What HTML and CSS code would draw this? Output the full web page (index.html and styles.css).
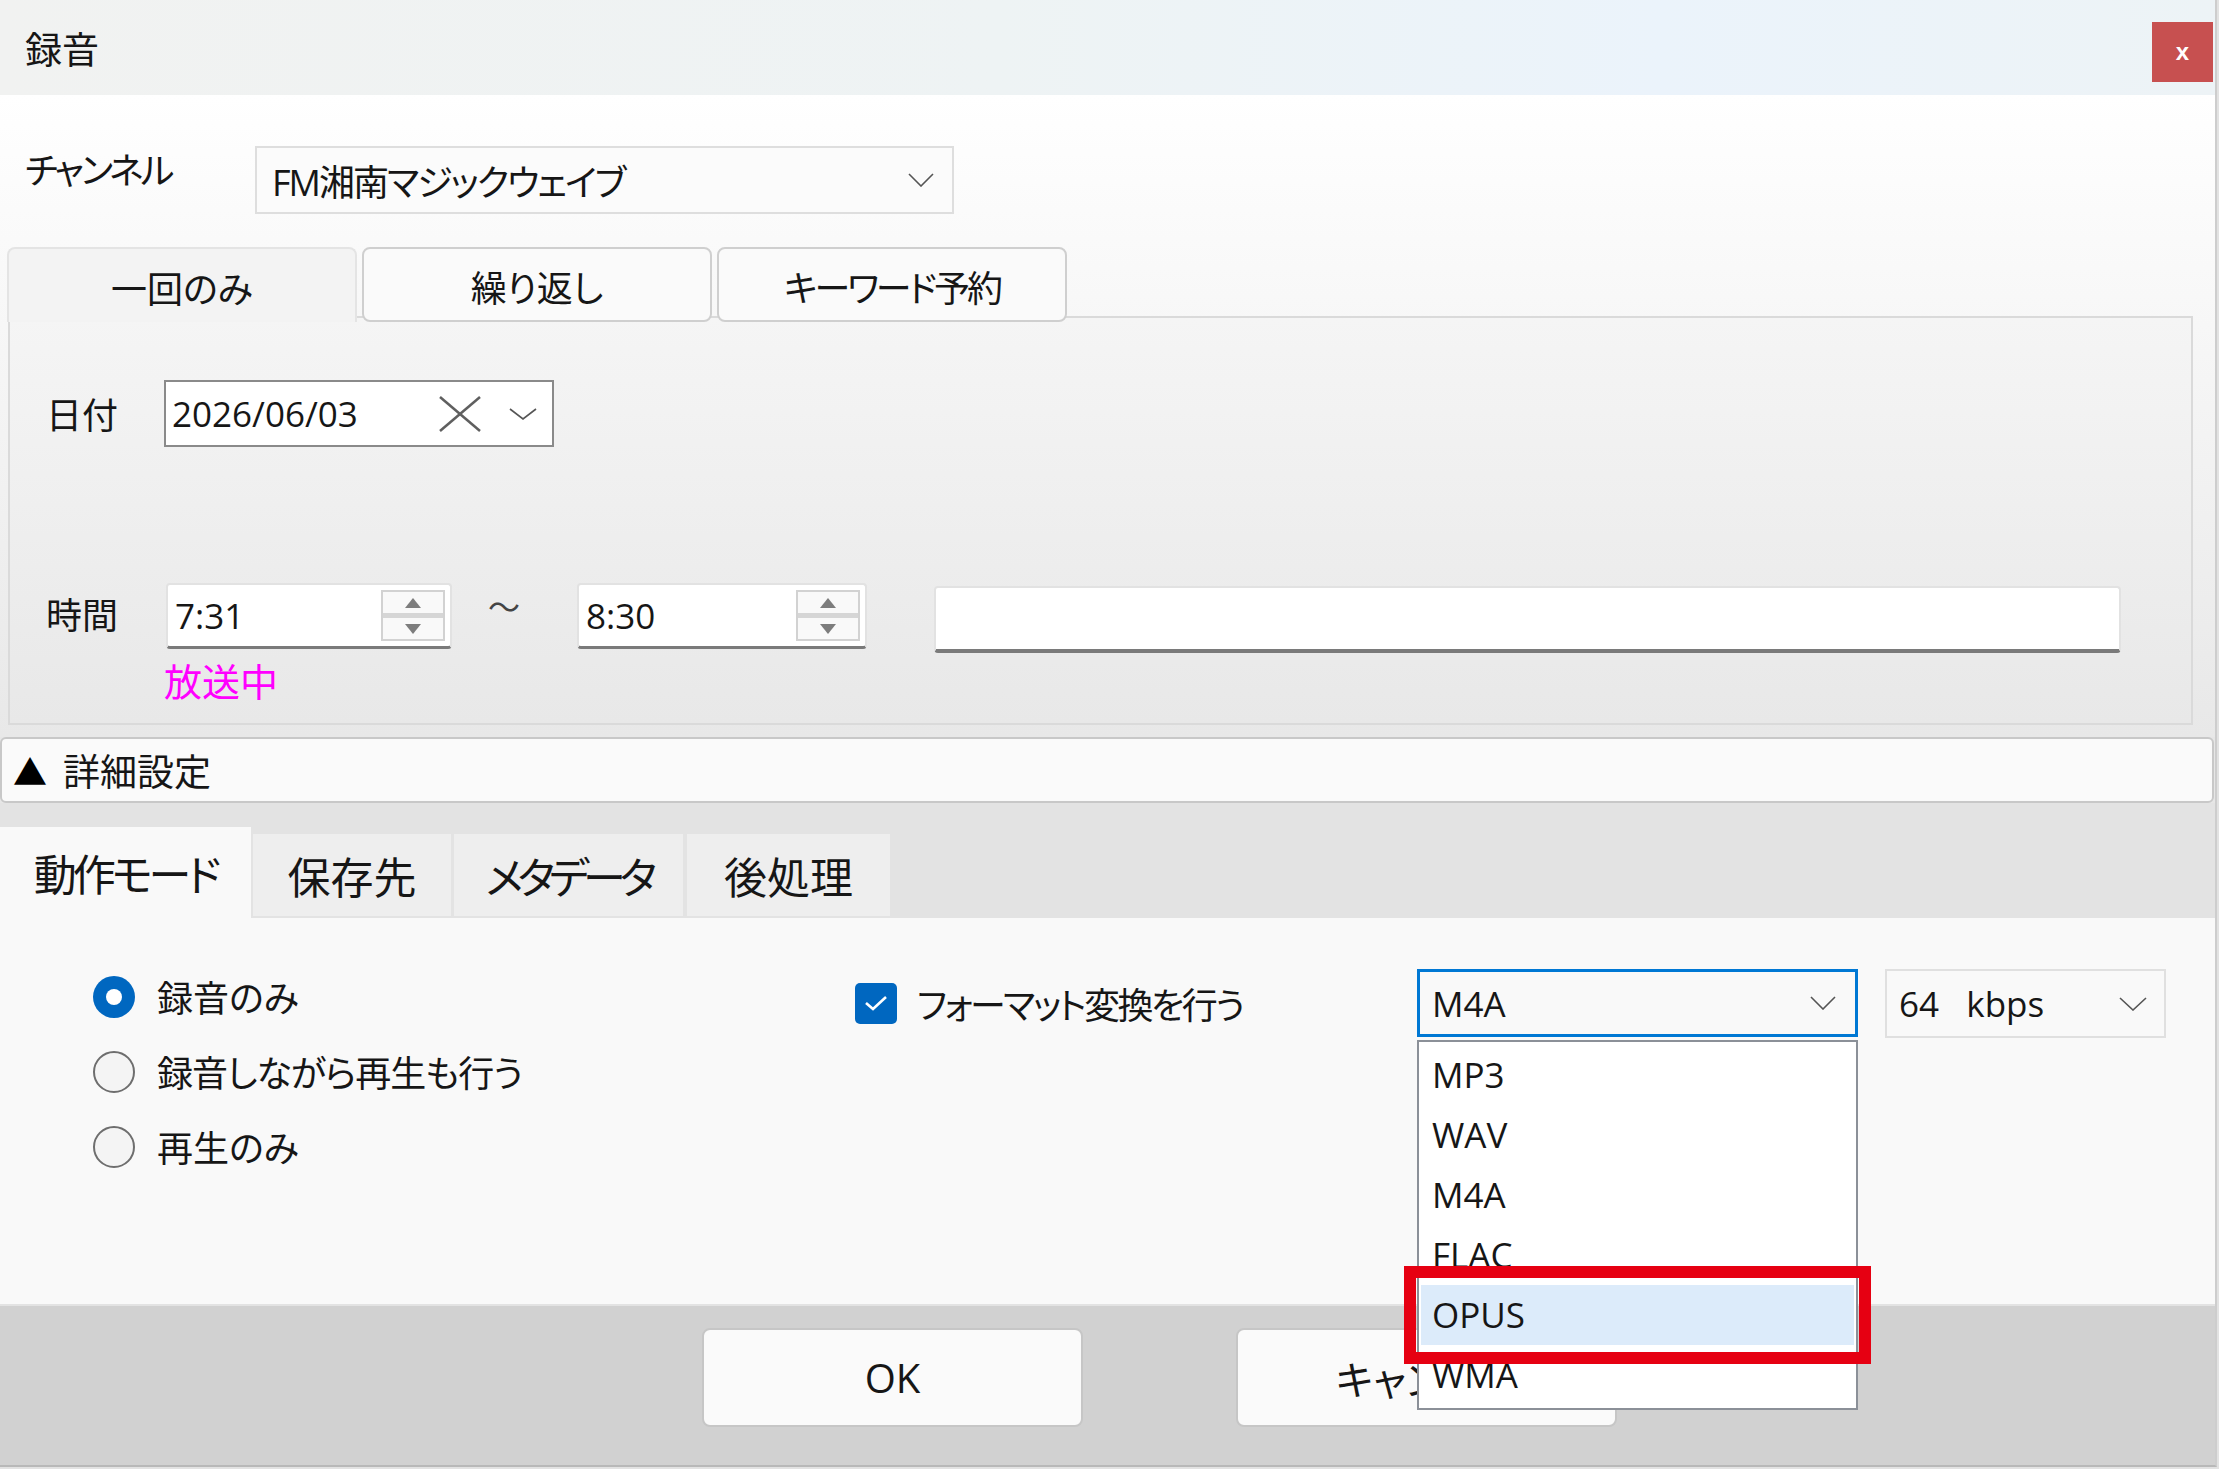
FILE: index.html
```html
<!DOCTYPE html>
<html lang="ja">
<head>
    <meta charset="UTF-8">
    <title>録音</title>
    <link rel="stylesheet" href="styles.css">
</head>
<body>
    <div class="window">
        <header class="titlebar">
            <span class="title">録音</span>
            <button class="close">x</button>
        </header>

        <div class="upper">
            <div class="channel-row">
                <span class="label">チャンネル</span>
                <div class="select channel-select">
                    <span class="kana">FM湘南マジックウェイブ</span>
                    <svg class="chevron" width="26" height="14" viewBox="0 0 26 14"><polyline points="1,1 13,13 25,1"/></svg>
                </div>
            </div>

            <div class="mode-tabs">
                <div class="mode-tab active">一回のみ</div>
                <div class="mode-tab">繰り返し</div>
                <div class="mode-tab kana">キーワード予約</div>
            </div>

            <div class="panel">
                <div class="field-row">
                    <span class="label">日付</span>
                    <div class="date-box">
                        <span>2026/06/03</span>
                        <svg class="clear" width="44" height="38" viewBox="0 0 44 38"><line x1="2" y1="2" x2="42" y2="36"/><line x1="42" y1="2" x2="2" y2="36"/></svg>
                        <svg class="chevron small" width="30" height="14" viewBox="0 0 30 14"><polyline points="2,2 15,12 28,2"/></svg>
                    </div>
                </div>

                <div class="field-row time-row">
                    <span class="label">時間</span>
                    <div class="time-box">
                        <span>7:31</span>
                        <div class="spin"><span class="up"></span><span class="down"></span></div>
                    </div>
                    <span class="tilde">～</span>
                    <div class="time-box wide">
                        <span>8:30</span>
                        <div class="spin"><span class="up"></span><span class="down"></span></div>
                    </div>
                    <div class="memo-box"></div>
                </div>
                <div class="on-air">放送中</div>
            </div>
        </div>

        <div class="detail-wrap">
            <div class="detail-bar"><span class="arrow">▲</span>詳細設定</div>
        </div>

        <div class="sub-tabs">
            <div class="sub-tab active">動作モード</div>
            <div class="sub-tab t-save">保存先</div>
            <div class="sub-tab t-meta">メタデータ</div>
            <div class="sub-tab t-post">後処理</div>
        </div>

        <div class="sub-content">
            <div class="radio-list">
                <div class="radio-row"><span class="radio on"></span>録音のみ</div>
                <div class="radio-row tight"><span class="radio"></span>録音しながら再生も行う</div>
                <div class="radio-row"><span class="radio"></span>再生のみ</div>
            </div>

            <div class="convert">
                <span class="check">
                    <svg width="24" height="16" viewBox="0 0 24 16"><polyline points="2,8 9,14 22,2"/></svg>
                </span>
                <span class="kana">フォーマット変換を行う</span>
            </div>

            <div class="format-wrap">
                <div class="select format-select">
                    <span>M4A</span>
                    <svg class="chevron" width="26" height="14" viewBox="0 0 26 14"><polyline points="1,1 13,13 25,1"/></svg>
                </div>
                <ul class="format-list">
                    <li>MP3</li>
                    <li>WAV</li>
                    <li>M4A</li>
                    <li>FLAC</li>
                    <li class="hover">OPUS</li>
                    <li>WMA</li>
                    <div class="callout"></div>
                </ul>
            </div>

            <div class="select rate-select">
                <span>64&nbsp;&nbsp;&nbsp;kbps</span>
                <svg class="chevron" width="28" height="14" viewBox="0 0 28 14"><polyline points="1,1 14,13 27,1"/></svg>
            </div>
        </div>

        <div class="footer">
            <button class="btn">OK</button>
            <button class="btn">キャンセル</button>
        </div>
    </div>
</body>
</html>
```

FILE: styles.css
```css
* {
    margin: 0;
    padding: 0;
    box-sizing: border-box;
}

body {
    width: 2219px;
    height: 1469px;
    overflow: hidden;
    background: #e2e2e2;
    font-family: "Open Sans", "Noto Sans CJK JP", sans-serif;
    font-size: 36px;
    color: #161616;
    font-feature-settings: "palt";
}

.kana {
    letter-spacing: -2px;
}

.window {
    width: 2217px;
    height: 1467px;
    border-right: 2px solid #cdcdcd;
    border-bottom: 2px solid #b8b8b8;
    background: #f9f9f9;
    display: flex;
    flex-direction: column;
}

/* title bar */
.titlebar {
    height: 95px;
    flex: none;
    display: flex;
    align-items: center;
    padding-left: 25px;
    background: linear-gradient(90deg, #f1f2f1 0%, #eef3f4 45%, #ebf3fb 75%, #edf3f6 100%);
}
.title {
    font-size: 37px;
}
.close {
    margin-left: auto;
    margin-right: 2px;
    align-self: flex-start;
    margin-top: 22px;
    width: 61px;
    height: 60px;
    border: 0;
    background: #c75050;
    color: #fff;
    font: bold 24px "Liberation Sans", sans-serif;
}

/* upper part */
.upper {
    flex: none;
    padding: 51px 0 12px;
    background: linear-gradient(#ffffff 0, #f7f7f7 230px, #e8e8e8 100%);
}
.channel-row {
    display: flex;
    align-items: flex-start;
    height: 68px;
    padding-left: 25px;
}
.channel-row .label {
    width: 230px;
    line-height: 50px;
    letter-spacing: -3px;
}
.select {
    display: flex;
    align-items: center;
    justify-content: space-between;
    background: #fbfbfb;
    border: 2px solid #dedede;
}
.channel-select {
    width: 699px;
    height: 68px;
    padding: 0 18px 0 15px;
}
.chevron polyline {
    fill: none;
    stroke: #555;
    stroke-width: 1.6;
}

.mode-tabs {
    display: flex;
    gap: 5px;
    margin-top: 33px;
    padding-left: 7px;
    position: relative;
    z-index: 1;
}
.mode-tab {
    width: 350px;
    height: 75px;
    display: flex;
    align-items: center;
    justify-content: center;
    padding-top: 4px;
    border: 2px solid #cfcfcf;
    border-radius: 8px;
    background: #fafafa;
}
.mode-tab.kana {
    letter-spacing: -3px;
}
.mode-tab.active {
    background: #f3f3f3;
    border-color: #e4e4e4;
    border-bottom: none;
    border-radius: 8px 8px 0 0;
}

.panel {
    margin: -6px 22px 0 8px;
    height: 409px;
    border: 2px solid #dadada;
    background: linear-gradient(#f5f5f5, #e8e8e8);
    padding: 62px 0 0 36px;
}
.field-row {
    display: flex;
    align-items: center;
}
.field-row .label {
    width: 118px;
}
.date-box {
    width: 390px;
    height: 67px;
    border: 2px solid #8a8a8a;
    background: #fff;
    display: flex;
    align-items: center;
    padding: 0 14px 0 6px;
    font-size: 35px;
}
.date-box .clear {
    margin-left: auto;
    margin-right: 26px;
}
.clear line {
    stroke: #5f5f5f;
    stroke-width: 2.5;
}

.time-row {
    margin-top: 136px;
    align-items: flex-start;
}
.time-row .label {
    width: 120px;
    line-height: 66px;
}
.time-box {
    width: 286px;
    height: 66px;
    background: #fff;
    border: 2px solid #e2e2e2;
    border-bottom: 3px solid #7a7a7a;
    border-radius: 4px;
    display: flex;
    align-items: center;
    justify-content: space-between;
    padding: 0 5px 0 7px;
    font-size: 35px;
}
.time-box.wide {
    width: 290px;
}
.spin {
    width: 64px;
    height: 51px;
    border: 2px solid #d2d2d2;
    background: #f9f9f9;
    display: flex;
    flex-direction: column;
}
.spin span {
    flex: 1;
    display: flex;
    align-items: center;
    justify-content: center;
}
.spin .up {
    border-bottom: 5px solid #d6d6d6;
}
.spin .up::before {
    content: "";
    border-left: 8px solid transparent;
    border-right: 8px solid transparent;
    border-bottom: 10px solid #7d7d7d;
}
.spin .down::before {
    content: "";
    border-left: 8px solid transparent;
    border-right: 8px solid transparent;
    border-top: 10px solid #7d7d7d;
}
.tilde {
    width: 35px;
    margin: 0 54px 0 36px;
    font-size: 32px;
    line-height: 48px;
    color: #444;
}
.memo-box {
    width: 1187px;
    height: 67px;
    margin: 3px 0 0 67px;
    background: #fff;
    border: 2px solid #e2e2e2;
    border-bottom: 4px solid #7a7a7a;
    border-radius: 4px;
}
.on-air {
    margin: 4px 0 0 118px;
    color: #ff00ff;
    font-size: 38px;
    line-height: 48px;
}

/* detail bar */
.detail-wrap {
    flex: none;
    background: #e6e6e6;
}
.detail-bar {
    height: 66px;
    margin-right: 1px;
    border: 2px solid #c8c8c8;
    border-radius: 6px;
    background: #fafafa;
    display: flex;
    align-items: center;
    padding-left: 11px;
    font-size: 37px;
}
.arrow {
    font-size: 34px;
    margin-right: 16px;
    color: #000;
}

.sub-tabs {
    flex: none;
    height: 115px;
    background: #e3e3e3;
    display: flex;
    align-items: flex-end;
}
.sub-tab {
    height: 82px;
    margin: 0 0 2px 2px;
    background: #eeeeee;
    font-size: 43px;
    display: flex;
    align-items: center;
    justify-content: center;
}
.sub-tab.active {
    width: 251px;
    height: 91px;
    margin: 0;
    background: #f9f9f9;
    letter-spacing: -4px;
}
.t-save { width: 198px; }
.t-meta { width: 229px; margin-left: 3px; letter-spacing: -6px; }
.t-post { width: 203px; margin-left: 4px; }

.sub-content {
    flex: none;
    height: 386px;
    background: #f9f9f9;
    display: flex;
    align-items: flex-start;
    padding-top: 41px;
}
.radio-list {
    width: 762px;
    margin-left: 93px;
}
.radio-row {
    height: 75px;
    display: flex;
    align-items: center;
    gap: 22px;
}
.radio-row.tight {
    letter-spacing: -1px;
}
.radio {
    width: 42px;
    height: 42px;
    border-radius: 50%;
    border: 2px solid #6e6e6e;
    background: #f4f4f4;
}
.radio.on {
    border: none;
    background: #0067c0;
    display: flex;
    align-items: center;
    justify-content: center;
}
.radio.on::after {
    content: "";
    width: 16px;
    height: 16px;
    border-radius: 50%;
    background: #fff;
}

.convert {
    width: 562px;
    height: 68px;
    margin-top: 10px;
    display: flex;
    align-items: center;
    gap: 20px;
}
.convert .kana {
    letter-spacing: -2.5px;
}
.check {
    width: 42px;
    height: 41px;
    border-radius: 5px;
    background: #0067c0;
    display: flex;
    align-items: center;
    justify-content: center;
}
.check polyline {
    fill: none;
    stroke: #fff;
    stroke-width: 2.6;
}

.format-wrap {
    position: relative;
    z-index: 5;
    width: 441px;
    margin: 10px 27px 0 0;
}
.format-select {
    height: 68px;
    border: 3px solid #0078d4;
    background: #f9f9f9;
    padding: 0 19px 0 12px;
    font-size: 35px;
}
.format-list {
    position: absolute;
    left: 0;
    top: 71px;
    width: 441px;
    height: 370px;
    background: #fff;
    border: 2px solid #8b9098;
    padding: 3px 2px;
    list-style: none;
}
.format-list li {
    height: 60px;
    line-height: 60px;
    padding-left: 11px;
    font-size: 35px;
}
.format-list li.hover {
    background: #dcebfa;
}
.callout {
    position: absolute;
    left: -15px;
    top: 224px;
    width: 467px;
    height: 98px;
    border: 12px solid #e60012;
}

.rate-select {
    width: 281px;
    height: 69px;
    margin-top: 10px;
    border: 2px solid #e0e0e0;
    background: #f9f9f9;
    padding: 0 17px 0 12px;
    font-size: 35px;
}

/* footer */
.footer {
    flex: none;
    height: 161px;
    background: #d1d1d1;
    border-top: 2px solid #e3e3e3;
    display: flex;
    align-items: flex-start;
    gap: 153px;
    padding: 22px 0 0 702px;
}
.btn {
    width: 381px;
    height: 99px;
    border: 2px solid #c6c6c6;
    border-radius: 8px;
    background: #fafafa;
    font-family: inherit;
    font-size: 40px;
    color: #161616;
    font-feature-settings: "palt";
}
```
